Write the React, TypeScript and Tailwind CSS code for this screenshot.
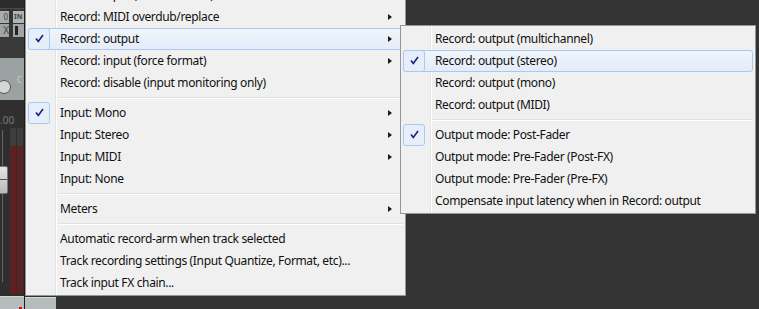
import React from 'react';

type Item =
    | { sep: true }
    | { label: string; checked?: boolean; arrow?: boolean; hot?: boolean };

const mainItems: Item[] = [
    { label: 'Record: input (audio or MIDI)', arrow: true },
    { label: 'Record: MIDI overdub/replace', arrow: true },
    { label: 'Record: output', checked: true, arrow: true, hot: true },
    { label: 'Record: input (force format)', arrow: true },
    { label: 'Record: disable (input monitoring only)' },
    { sep: true },
    { label: 'Input: Mono', checked: true, arrow: true },
    { label: 'Input: Stereo', arrow: true },
    { label: 'Input: MIDI', arrow: true },
    { label: 'Input: None' },
    { sep: true },
    { label: 'Meters', arrow: true },
    { sep: true },
    { label: 'Automatic record-arm when track selected' },
    { label: 'Track recording settings (Input Quantize, Format, etc)...' },
    { label: 'Track input FX chain...' },
];

const subItems: Item[] = [
    { label: 'Record: output (multichannel)' },
    { label: 'Record: output (stereo)', checked: true, hot: true },
    { label: 'Record: output (mono)' },
    { label: 'Record: output (MIDI)' },
    { sep: true },
    { label: 'Output mode: Post-Fader', checked: true },
    { label: 'Output mode: Pre-Fader (Post-FX)' },
    { label: 'Output mode: Pre-Fader (Pre-FX)' },
    { label: 'Compensate input latency when in Record: output' },
];

function Check() {
    return (
        <svg width="9" height="9" viewBox="0 0 9 9">
            <path d="M1 4.5 L3.3 7.5 L8 1" fill="none" stroke="#14208a" strokeWidth="1.6" />
        </svg>
    );
}

function Menu({ items }: { items: Item[] }) {
    return (
        <div className="relative pt-[2px] pb-[1px] px-[2px]">
            {/* gutter line */}
            <div className="absolute top-0 bottom-0 left-[29px] w-[2px] border-l border-l-[#e2e3e3] border-r border-r-white" />
            {items.map((it, i) =>
                'sep' in it ? (
                    <div key={i} className="h-[8px] flex items-center pl-[30px]">
                        <div className="w-full h-[2px] border-t border-[#e0e0e0] border-b border-b-white" />
                    </div>
                ) : (
                    <div
                        key={i}
                        className={
                            'relative h-[22px] flex items-center ' +
                            (it.hot
                                ? 'rounded-[3px] border border-[#a8caf0] bg-gradient-to-b from-[#f1f5fb] to-[#e3ecf8]'
                                : 'border border-transparent')
                        }
                    >
                        <div className="w-[22px] h-[22px] -ml-px -mt-px flex items-center justify-center shrink-0">
                            {it.checked && (
                                <div className="w-[22px] h-[22px] rounded-[3px] border border-[#a8caf0] bg-[#e6eef9] flex items-center justify-center">
                                    <Check />
                                </div>
                            )}
                        </div>
                        <span className="ml-[10px] whitespace-nowrap text-[12px] tracking-[-0.35px] text-[#111]">{it.label}</span>
                        {it.arrow && (
                            <span className="absolute right-[10px] top-[7px] w-0 h-0 border-y-[3.5px] border-y-transparent border-l-[4px] border-l-[#1a1a1a]" />
                        )}
                    </div>
                )
            )}
        </div>
    );
}

export default function App() {
    return (
        <div
            className="relative w-[759px] h-[309px] overflow-hidden bg-[#333333] flex"
            style={{ fontFamily: '"Noto Sans", "Open Sans", sans-serif' }}
        >
            {/* mixer strip behind the menu */}
            <div className="w-[25px] h-full flex flex-col bg-[#353535] border-r border-[#1c1c1c]">
                <div className="h-[9px] bg-[#2c2c2c] border-b border-[#4a4a4a]" />
                <div className="h-[29px] flex gap-[4px] pt-[2px]">
                    <div className="w-[9px] flex flex-col gap-[1px]">
                        <div className="h-[12px] bg-[#a8acac] text-[8px] leading-[12px] text-[#444] text-right pr-px">0</div>
                        <div className="h-[13px] bg-[#a0a4a4] text-[10px] leading-[13px] text-[#444] text-right">X</div>
                    </div>
                    <div className="w-[11px] flex flex-col gap-[1px]">
                        <div className="h-[12px] bg-[#b0b4b4] text-[7px] leading-[12px] text-[#444] font-bold pl-px">IN</div>
                        <div className="h-[13px] bg-[#a0a4a4] p-[2px]">
                            <div className="w-[3px] h-full bg-[#222]" />
                        </div>
                    </div>
                </div>
                <div className="h-[20px] bg-[#3a3a3a]" />
                <div className="h-[42px] bg-[#9ca2a2] flex items-end pb-[6px] gap-[6px]">
                    <div className="w-[14px] h-[14px] -ml-[3px] rounded-full bg-[#d6d8d8] border border-[#555]" />
                    <span className="text-[8px] text-[#ccd] mb-[8px]">C</span>
                </div>
                <div className="h-[28px] bg-[#2f2f2f] flex items-end pb-[3px]">
                    <span className="text-[10px] text-[#777] leading-none">.00</span>
                </div>
                <div className="flex-1 flex bg-[#2e2e2e]">
                    <div className="relative w-[10px]">
                        <div className="absolute left-[2px] top-[2px] bottom-[14px] w-[2px] border-l border-[#666]" />
                        <div className="absolute left-[-2px] top-[38px] w-[10px] h-[28px] rounded-[2px] bg-gradient-to-b from-[#e6e6e6] to-[#b8b8b8] border border-[#777]">
                            <div className="mt-[12px] h-px bg-[#555]" />
                        </div>
                    </div>
                    <div className="w-[6px] flex flex-col pb-[2px]">
                        <div className="h-[18px] bg-[#3e3e3e]" />
                        <div className="flex-1 bg-[#5e2021]" />
                    </div>
                    <div className="w-px" />
                    <div className="w-[6px] flex flex-col pb-[2px]">
                        <div className="h-[18px] bg-[#3e3e3e]" />
                        <div className="flex-1 bg-[#5e2021]" />
                    </div>
                </div>
                <div className="h-[13px] bg-[#b5bcbc] border-t border-[#d4d8d8] relative">
                    <div className="absolute left-[19px] bottom-0 w-[3px] h-[2px] bg-[#e00]" />
                </div>
            </div>
            <div className="w-[31px] self-end h-[12px] bg-[#b5bcbc] border-t border-[#d4d8d8]" />

            {/* main context menu */}
            <div className="absolute left-[25px] top-[-19px] w-[381px] bg-[#f0f0f0] border border-[#979797]">
                <Menu items={mainItems} />
            </div>

            {/* submenu */}
            <div className="absolute left-[400px] top-[25px] w-[356px] bg-[#f0f0f0] border border-[#979797]">
                <Menu items={subItems} />
            </div>
        </div>
    );
}
